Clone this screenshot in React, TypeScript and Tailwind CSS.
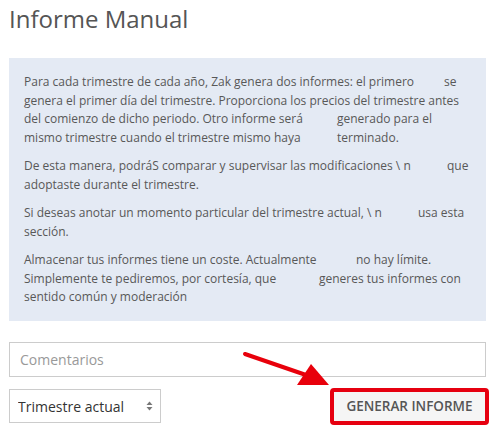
import React from "react";

// One visual line of the info box; `lead` sets where the trailing words begin
function GapLine({ lead, first, rest }: { lead: string; first: string; rest: string }) {
  return (
    <div className="flex whitespace-nowrap">
      <span className={`${lead} shrink-0`}>{first}</span>
      <span>{rest}</span>
    </div>
  );
}

export default function App() {
  return (
    <div className="relative w-[495px] h-[433px] bg-white px-[9px] font-['Open_Sans',sans-serif] text-[#555]">
      {/* Page Header */}
      <h1 className="pt-[6px] text-[24px] leading-[26px] font-normal text-[#555]">Informe Manual</h1>

      {/* Info box */}
      <div className="mt-[26px] bg-[#e4eaf4] px-[15px] pt-[15px] pb-[14px] text-[12px] leading-[18.5px] text-[#585858] space-y-[10px]">
        <div>
          <GapLine lead="w-[420px]" first="Para cada trimestre de cada año, Zak genera dos informes: el primero" rest="se" />
          <div className="whitespace-nowrap">
            genera el primer día del trimestre. Proporciona los precios del trimestre antes
          </div>
          <GapLine lead="w-[313px]" first="del comienzo de dicho periodo. Otro informe será" rest="generado para el" />
          <GapLine lead="w-[313px]" first="mismo trimestre cuando el trimestre mismo haya" rest="terminado." />
        </div>
        <div>
          <GapLine lead="w-[423px]" first="De esta manera, podráS comparar y supervisar las modificaciones \ n" rest="que" />
          <div>adoptaste durante el trimestre.</div>
        </div>
        <div>
          <GapLine lead="w-[394px]" first="Si deseas anotar un momento particular del trimestre actual, \ n" rest="usa esta" />
          <div>sección.</div>
        </div>
        <div>
          <GapLine lead="w-[332px]" first="Almacenar tus informes tiene un coste. Actualmente" rest="no hay límite." />
          <GapLine lead="w-[295px]" first="Simplemente te pediremos, por cortesía, que" rest="generes tus informes con" />
          <div>sentido común y moderación</div>
        </div>
      </div>

      {/* Comments */}
      <input
        type="text"
        placeholder="Comentarios"
        className="mt-[21px] block w-full h-[35px] border border-[#cccccc] bg-white px-[10px] text-[14px] text-[#555] placeholder:text-[#999] outline-none"
      />

      {/* Actions */}
      <div className="mt-[11px] flex items-center justify-between">
        <div className="relative w-[152px] h-[34px]">
          <select className="appearance-none w-full h-full border border-[#cccccc] bg-white pl-[8px] pr-[24px] text-[14px] text-[#333] outline-none">
            <option>Trimestre actual</option>
          </select>
          <svg
            className="pointer-events-none absolute right-[8px] top-[12px]"
            width="7"
            height="10"
            viewBox="0 0 7 10"
          >
            <path d="M3.5 0.5 L6.5 4 L0.5 4 Z" fill="#777" />
            <path d="M3.5 9.5 L6.5 6 L0.5 6 Z" fill="#777" />
          </svg>
        </div>
        <button className="-mr-[3px] h-[37px] w-[159px] rounded-[4px] border-[4px] border-[#e60010] bg-[#f5f5f5] text-[13.5px] font-semibold text-[#555]">
          GENERAR INFORME
        </button>
      </div>

      {/* Red annotation arrow */}
      <svg
        className="pointer-events-none absolute left-0 top-0"
        width="495"
        height="433"
        viewBox="0 0 495 433"
      >
        <line x1="245" y1="354" x2="306" y2="375" stroke="#e8000b" strokeWidth="4" strokeLinecap="round" />
        <polygon points="329,385 297,385 311,364" fill="#e8000b" />
      </svg>
    </div>
  );
}
